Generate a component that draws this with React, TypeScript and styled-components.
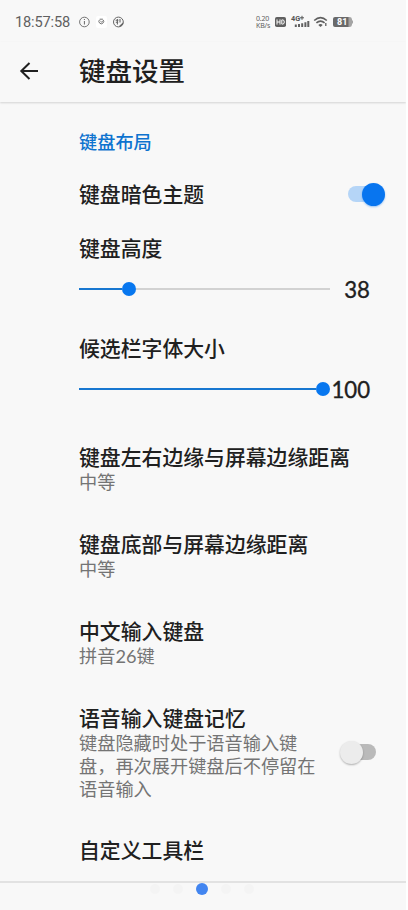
import React from 'react';
import styled, { createGlobalStyle } from 'styled-components';

const Global = createGlobalStyle`
  * { box-sizing: border-box; }
  html, body { margin: 0; background: #fff; overflow: hidden; }
  body { font-family: Lato, "Noto Sans CJK SC", sans-serif; color: #202020; }
`;

const Screen = styled.main`
  width: 406px;
  height: 910px;
  display: flex;
  flex-direction: column;
  background: #f8f8f8;
  overflow: hidden;
`;

const StatusBar = styled.div`
  height: 42px;
  flex: none;
  display: flex;
  align-items: center;
  padding: 2px 0 0 15px;
  color: #606060;
`;

const Clock = styled.span`
  width: 64px;
  font: 400 14.6px/20px Roboto, sans-serif;
  letter-spacing: -0.15px;
  white-space: nowrap;
`;

const StatusIcons = styled.svg`
  display: block;
  flex: none;
`;

const NetSpeed = styled.div`
  margin-left: 131px;
  width: 19px;
  font: 400 7px/7.5px "Noto Sans", sans-serif;
  letter-spacing: -0.2px;
  white-space: nowrap;
`;

const Header = styled.header`
  height: 60px;
  flex: none;
  display: flex;
  align-items: center;
  padding: 0 0 2px 19px;
  box-shadow: 0 1px 2px rgba(0, 0, 0, 0.15);
`;

const Title = styled.h1`
  margin: 0 0 0 40px;
  font-size: 26.5px;
  line-height: 36px;
  font-weight: 500;
`;

const List = styled.section`
  flex: none;
  height: 779px;
  display: flex;
  flex-direction: column;
  padding: 26px 0 0 79px;
  overflow: hidden;
`;

const SectionLabel = styled.h2`
  margin: 0 0 23px;
  font-size: 18.2px;
  line-height: 28px;
  font-weight: 500;
  color: #0e73cf;
`;

const Row = styled.div<{ $height: number }>`
  height: ${(p) => p.$height}px;
  flex: none;
  display: flex;
  align-items: flex-start;
  justify-content: space-between;
  padding-right: 20px;
`;

const Name = styled.div`
  font-size: 20.85px;
  line-height: 30px;
  font-weight: 500;
  white-space: nowrap;
`;

const Summary = styled.div`
  margin-top: -1px;
  width: 245px;
  font-size: 18.2px;
  line-height: 22.8px;
  color: #747474;
`;

const Track = styled.div<{ $on?: boolean; $top: number }>`
  width: 29px;
  height: 16px;
  flex: none;
  margin: ${(p) => p.$top}px ${(p) => (p.$on ? 9 : 10)}px 0 0;
  border-radius: 8px;
  display: flex;
  align-items: center;
  justify-content: ${(p) => (p.$on ? 'flex-end' : 'flex-start')};
  background: ${(p) => (p.$on ? '#b5d5f7' : '#bababa')};
`;

const Thumb = styled.div<{ $on?: boolean }>`
  width: 23px;
  height: 23px;
  flex: none;
  margin: ${(p) => (p.$on ? '0 -8px 0 0' : '0 0 0 -7px')};
  border-radius: 50%;
  background: ${(p) => (p.$on ? '#0875ef' : '#ececec')};
  box-shadow: 0 1px 2px ${(p) => (p.$on ? 'rgba(8,117,239,.4)' : 'rgba(0,0,0,.28)')};
`;

const SliderRow = styled.div<{ $height: number }>`
  height: ${(p) => p.$height}px;
  flex: none;
  display: flex;
  align-items: flex-start;
  padding-right: 36px;
`;

const Rail = styled.div`
  width: 251px;
  height: 28px;
  flex: none;
  display: flex;
  align-items: center;
`;

const Filled = styled.div`
  height: 2px;
  background: #1777d0;
`;

const Knob = styled.div`
  width: 14px;
  height: 14px;
  border-radius: 50%;
  background: #0877ef;
`;

const Remaining = styled.div`
  height: 2px;
  flex: 1;
  background: #d2d2d2;
`;

const Value = styled.div`
  flex: 1;
  display: flex;
  justify-content: flex-end;
  font: 400 22.2px/30px Lato, sans-serif;
  -webkit-text-stroke: 0.35px #202020;
  white-space: nowrap;
`;

const Footer = styled.footer`
  height: 29px;
  flex: none;
  display: flex;
  justify-content: center;
  gap: 13px;
  padding: 0 3px 0 0;
  border-top: 2px solid #e2e2e2;
`;

const Dot = styled.i<{ $active?: boolean }>`
  width: ${(p) => (p.$active ? 12 : 10)}px;
  height: ${(p) => (p.$active ? 12 : 10)}px;
  margin-top: ${(p) => (p.$active ? 0 : 1)}px;
  border-radius: 50%;
  background: ${(p) => (p.$active ? '#4285f0' : '#f4f4f4')};
`;

function Toggle({ on, top }: { on?: boolean; top: number }) {
  return (
    <Track $on={on} $top={top}>
      <Thumb $on={on} />
    </Track>
  );
}

function Slider({ filled, value, height }: { filled: number; value: number; height: number }) {
  return (
    <SliderRow $height={height}>
      <Rail>
        <Filled style={{ width: filled }} />
        <Knob />
        {value < 100 && <Remaining />}
      </Rail>
      <Value>{value}</Value>
    </SliderRow>
  );
}

function Item({ name, summary, height }: { name: string; summary?: string; height: number }) {
  return (
    <Row $height={height}>
      <div>
        <Name>{name}</Name>
        {summary && <Summary>{summary}</Summary>}
      </div>
    </Row>
  );
}

export default function App() {
  return (
    <>
      <Global />
      <Screen>
        <StatusBar>
          <Clock>18:57:58</Clock>
          <StatusIcons width="46" height="14" viewBox="0 0 46 14">
            <g fill="none" stroke="#666">
              <circle cx="5.4" cy="7" r="4.8" strokeWidth=".9" />
              <path d="M5.4 6v3.5M5.4 4v1" strokeWidth="1" />
              <rect x="17" y="1" width="11" height="12" rx="2" fill="#fff" stroke="none" />
              <path d="M20.4 4.9a2.4 2.4 0 1 0 3.8 0M20.7 4.2h3.2M21.4 6.2l1.2 1 1.3-1.4" strokeWidth=".9" />
              <circle cx="39.4" cy="7" r="4.9" strokeWidth="1" />
              <path d="M36.6 5.2h2.8M36.8 7.2h2.4M38.4 4v5.5M41 4v3.5" strokeWidth="1.1" />
              <path d="M39.6 11.6l4.6-4.4v2.4l-2.2 2z" fill="#666" stroke="none" />
            </g>
          </StatusIcons>
          <NetSpeed>
            0.20
            <br />
            KB/s
          </NetSpeed>
          <StatusIcons width="80" height="18" viewBox="0 0 80 18">
            <rect x="0" y="4" width="11" height="10" rx="1.8" fill="#606060" />
            <path d="M2 6.4v5.2M5 6.4v5.2M2 9h3M6.8 6.9v4.2h.9q1.6 0 1.6-2.1T7.7 6.9z" fill="none" stroke="#fff" strokeWidth="1" />
            <text x="16" y="8.3" fontFamily="Roboto" fontWeight="700" fontSize="7.3" fill="#555">4G</text>
            <path d="M27 2.8v4M25 4.8h4" stroke="#555" strokeWidth="1" />
            <path d="M21.5 11.5V14M24.7 11v3M27.9 10.2V14M31.1 9.2V14M34 8v6" stroke="#606060" strokeWidth="2" transform="translate(-.7)" />
            <g fill="none" stroke="#606060" strokeWidth="1.6">
              <path d="M39.2 7.5Q45.5 1.8 51.8 7.5M41.4 9.9q4.1-3.6 8.2 0" />
              <path d="M43.3 12q2.2-1.8 4.4 0l-2.2 2z" fill="#606060" stroke="none" />
              <path d="M50.8 10v3" strokeWidth="1.3" />
            </g>
            <path d="M73 4h1.5a2.5 2.5 0 0 1 2.5 2.2v1.2h1v3.2h-1v1.2a2.5 2.5 0 0 1-2.5 2.2H73z" fill="#a4a4a4" />
            <path d="M60 4h13.5v10H60a2 2 0 0 1-2-2V6a2 2 0 0 1 2-2z" fill="#6a6a6a" />
            <text x="62" y="12.2" fontFamily="Roboto" fontWeight="700" fontSize="9" fill="#fff">81</text>
          </StatusIcons>
        </StatusBar>
        <Header>
          <svg width="20" height="20" viewBox="0 0 20 20" fill="none" stroke="#202020" strokeWidth="2">
            <path d="M19 10H2.5M10.5 2L2.3 10l8.2 8" />
          </svg>
          <Title>键盘设置</Title>
        </Header>
        <List>
          <SectionLabel>键盘布局</SectionLabel>
          <Row $height={54}>
            <Name>键盘暗色主题</Name>
            <Toggle on top={7} />
          </Row>
          <Item name="键盘高度" height={42} />
          <Slider filled={43} value={38} height={58} />
          <Item name="候选栏字体大小" height={42} />
          <Slider filled={237} value={100} height={67} />
          <Item name="键盘左右边缘与屏幕边缘距离" summary="中等" height={87} />
          <Item name="键盘底部与屏幕边缘距离" summary="中等" height={87} />
          <Item name="中文输入键盘" summary="拼音26键" height={87} />
          <Row $height={132}>
            <div>
              <Name>语音输入键盘记忆</Name>
              <Summary>键盘隐藏时处于语音输入键盘，再次展开键盘后不停留在语音输入</Summary>
            </div>
            <Toggle top={41} />
          </Row>
          <Item name="自定义工具栏" height={30} />
        </List>
        <Footer>
          <Dot />
          <Dot />
          <Dot $active />
          <Dot />
          <Dot />
        </Footer>
      </Screen>
    </>
  );
}
